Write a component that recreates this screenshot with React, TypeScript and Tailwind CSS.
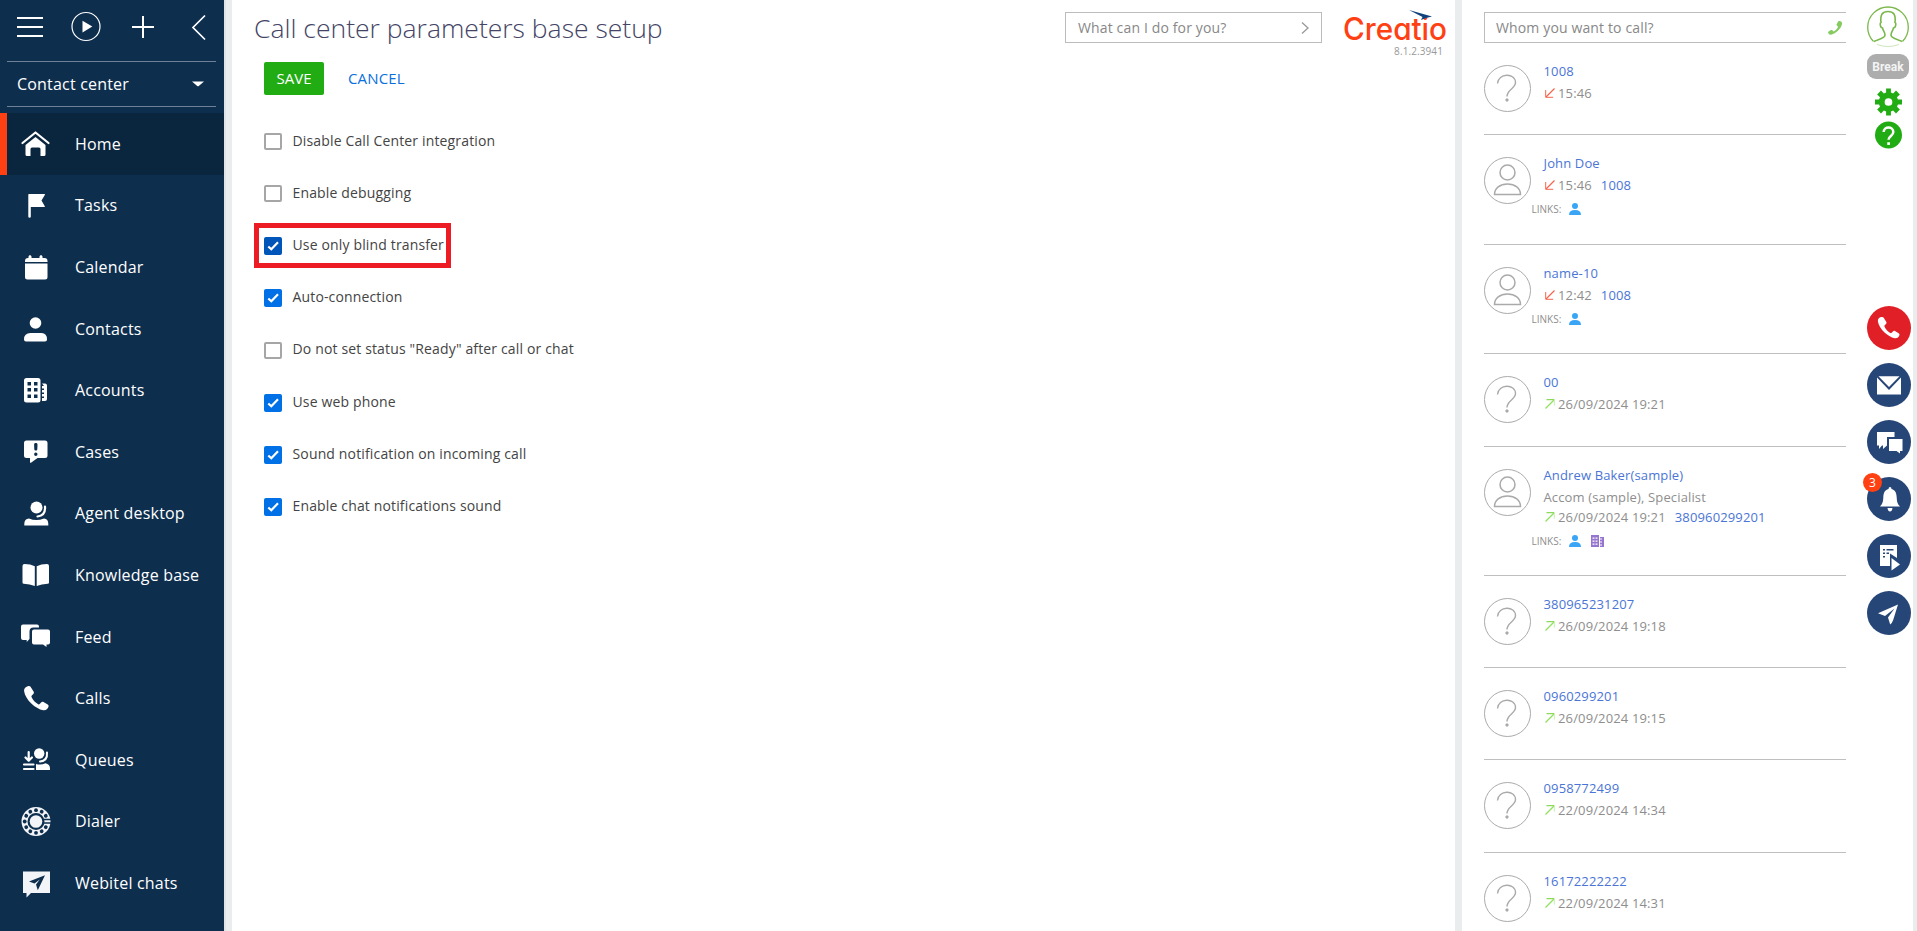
import { useState } from 'react';
import type { ReactNode } from 'react';

interface Setting { id: string; label: string; checked: boolean; highlighted?: boolean; }
interface Call { name: string; time: string; incoming?: boolean; contact?: boolean; account?: boolean; job?: string; phone?: string; height: string; }

const PHONE = 'M5.2 1.2C3 1.8 1.2 3.6 1.6 6.2c.7 4.3 3.4 8.600 7.200 12.200 3.600 3.400 7.800 6 12 6.800 2.600.4 4.500-1.300 5.200-3.400.3-.9 0-1.700-.8-2.200l-4.200-2.500c-.8-.5-1.800-.3-2.400.4l-1.400 1.600c-.4.4-1 .5-1.500.2-3-1.800-5.200-4.200-6.700-7.300-.2-.5-.1-1 .3-1.400l1.500-1.500c.6-.6.8-1.500.4-2.300L8.200 1.900c-.4-.8-1.600-1-3-.7z';

const MENU: { label: string; icon: ReactNode }[] = [
  { label: 'Home', icon: <><path d="M2 13 15 2.500 28 13" fill="none" stroke="currentColor" strokeWidth="2.200" strokeLinecap="round" strokeLinejoin="round" /><path d="M15 7 25 15v9.500a1.500 1.500 0 0 1-1.500 1.500H20v-7a1.500 1.500 0 0 0-1.500-1.500h-7A1.500 1.500 0 0 0 10 19v7H6.500A1.500 1.500 0 0 1 5 24.500V15z" /></> },
  { label: 'Tasks', icon: <path d="M8.500 3H24q.8 0 .3.900L21 9.500l3.300 5.800q.4.800-.4.800H10.300V25.500a1.200 1.200 0 0 1-2.500 0V3.600Q7.800 3 8.500 3z" /> },
  { label: 'Calendar', icon: <path d="M9.500 2.200c.8 0 1.500.7 1.500 1.400V5h8V3.600c0-.7.700-1.400 1.500-1.400s1.500.7 1.500 1.400V5h2a3 3 0 0 1 3 3v1H4.500V8a3 3 0 0 1 3-3H8V3.600c0-.7.700-1.400 1.500-1.400zM4.500 10.600H27V24a2.500 2.500 0 0 1-2.500 2.500H7A2.500 2.500 0 0 1 4.500 24z" /> },
  { label: 'Contacts', icon: <><circle cx="15" cy="8" r="5.800" /><path d="M10 18h11q5.500 0 5.500 6.500 0 2-2 2h-19q-2 0-2-2Q3.500 18 10 18z" /></> },
  { label: 'Accounts', icon: <path fillRule="evenodd" d="M6 2h11.500A2.500 2.500 0 0 1 20 4.500V24a2.500 2.500 0 0 1-2.500 2.500H6A2.500 2.500 0 0 1 3.500 24V4.500A2.500 2.500 0 0 1 6 2zm1 4v3.500h3.500V6zm6.500 0v3.500H17V6zM7 12v3.500h3.500V12zm6.500 0v3.500H17V12zM7 18.500V22h3.500v-3.500zm6.500 0V22H17v-3.500zM21.500 7.500h3a2 2 0 0 1 2 2V23a2 2 0 0 1-2 2h-3v-3h2v-1.500h-2v-2.500h2v-1.500h-2V14h2v-1.500h-2V10h2z" /> },
  { label: 'Cases', icon: <path fillRule="evenodd" d="M6 2.500h18.500A2.500 2.500 0 0 1 27 5v12.500a2.500 2.500 0 0 1-2.500 2.500H17l-6.500 4.700q-1 .5-1-.5V20H6a2.500 2.500 0 0 1-2.500-2.500V5A2.500 2.500 0 0 1 6 2.500zM15.300 5c-1 0-1.800.5-1.700 1.500l.2 4.500c0 1 .6 1.500 1.500 1.500s1.500-.5 1.500-1.500L17 6.500C17 5.500 16.300 5 15.300 5zm0 9.500a1.700 1.700 0 1 0 0 3.400 1.700 1.700 0 0 0 0-3.400z" /> },
  { label: 'Agent desktop', icon: <><circle cx="16" cy="8.500" r="6" /><path d="M24.500 7.500c.5 6-2.500 9.500-7.500 10" fill="none" stroke="currentColor" strokeWidth="2.200" strokeLinecap="round" /><path d="M8.500 19.500q7 3 15 0 4.300.3 4.300 5.500v1.500h-24V25q0-5.200 4.700-5.500z" /></> },
  { label: 'Knowledge base', icon: <path d="M2 5q0-2 2-2 6 0 10.300 2.300V25q-4.800-2-11-2.200Q2 22.700 2 21.400zM28.500 5q0-2-2-2-6 0-10.300 2.300V25q4.800-2 11-2.200 1.300-.1 1.300-1.400z" /> },
  { label: 'Feed', icon: <path d="M3 1.500h13.500q2 0 2 2V4.500H13q-4 0-4 4V16l-2.800 3v-2H2.500q-2 0-2-2V3.500q0-2 2-2zM13.500 6.500h14q2 0 2 2v11q0 2-2 2H26v2.500l-3.500-2.500h-9q-2 0-2-2v-11q0-2 2-2z" /> },
  { label: 'Calls', icon: <path d={PHONE} transform="translate(2 1)" /> },
  { label: 'Queues', icon: <><path d="M8.200 6v8M5 11.500l3.200 3.200 3.200-3.200M3.500 18.500H13M3.500 23H13" fill="none" stroke="currentColor" strokeWidth="2.200" strokeLinecap="round" strokeLinejoin="round" /><circle cx="18.700" cy="7.500" r="5.200" /><path d="M26.500 6.500c.5 5.500-2 8.500-7 9" fill="none" stroke="currentColor" strokeWidth="2" strokeLinecap="round" /><path d="M15.500 24v-6q5 1.500 9.500-.8 4.500.8 4.500 5.300V24z" /></> },
  { label: 'Dialer', icon: <Dial /> },
  { label: 'Webitel chats', icon: <path fillRule="evenodd" fill="#f2f4f7" d="M2.500 2.500h27V24H10.500L6 28.500V24H2.500zM24.500 6.200 8.500 12.500l5.500 2 5.300-4-3.800 5 1.800 5.800z" /> },
];

const SETTINGS: Setting[] = [
  { id: 'disable', label: 'Disable Call Center integration', checked: false },
  { id: 'debug', label: 'Enable debugging', checked: false },
  { id: 'blind', label: 'Use only blind transfer', checked: true, highlighted: true },
  { id: 'auto', label: 'Auto-connection', checked: true },
  { id: 'ready', label: 'Do not set status "Ready" after call or chat', checked: false },
  { id: 'webphone', label: 'Use web phone', checked: true },
  { id: 'sound', label: 'Sound notification on incoming call', checked: true },
  { id: 'chatsound', label: 'Enable chat notifications sound', checked: true },
];

const CALLS: Call[] = [
  { name: '1008', time: '15:46', incoming: true, height: 'h-[92px]' },
  { name: 'John Doe', time: '15:46', incoming: true, contact: true, phone: '1008', height: 'h-[110px]' },
  { name: 'name-10', time: '12:42', incoming: true, contact: true, phone: '1008', height: 'h-[109px]' },
  { name: '00', time: '26/09/2024 19:21', height: 'h-[93px]' },
  { name: 'Andrew Baker(sample)', time: '26/09/2024 19:21', contact: true, account: true, job: 'Accom (sample), Specialist', phone: '380960299201', height: 'h-[129px]' },
  { name: '380965231207', time: '26/09/2024 19:18', height: 'h-[92px]' },
  { name: '0960299201', time: '26/09/2024 19:15', height: 'h-[92px]' },
  { name: '0958772499', time: '22/09/2024 14:34', height: 'h-[93px]' },
  { name: '16172222222', time: '22/09/2024 14:31', height: 'h-[92px]' },
];

const COMMUNICATION: { id: string; bg: string; icon: ReactNode; badge?: number }[] = [
  { id: 'phone', bg: 'bg-[#e01f26]', icon: <path d={PHONE} transform="translate(9.500 10) scale(.88)" /> },
  { id: 'mail', bg: 'bg-[#274678]', icon: <path d="M10 14.500v17h24v-17L22 27zM11.500 13.300h21L22 24z" /> },
  { id: 'chat', bg: 'bg-[#274678]', icon: <path d="M10 12h17.500v5H20v8.500L16 29v-3.500h-1L12 29v-3.500h-2zM22 19h13.500v12H33v2.500L29.500 31H22z" /> },
  { id: 'bell', bg: 'bg-[#274678]', badge: 3, icon: <path d="M23 10q1.500 0 1.500 2c4 1.200 5 4 5.200 8.500.2 4.500 1 6.500 3.300 9H13c2.300-2.500 3.100-4.500 3.300-9 .2-4.500 1.200-7.300 5.200-8.500q0-2 1.500-2zM20.500 31h5Q25 34.500 23 34.500T20.500 31z" /> },
  { id: 'process', bg: 'bg-[#274678]', icon: <><path fillRule="evenodd" d="M13 11h17v13l-7-4.500V32H13zM16 15v1.500h2V15zm3.500 0v1.500h7V15zM16 18.500V20h2v-1.500zm3.500 0V20h2.500v-1.500zM16 22v1.500h2V22z" /><path d="m24.500 24 8.500 6.500-8.500 6z" /></> },
  { id: 'send', bg: 'bg-[#274678]', icon: <path d="M31 13.500 11 22.300l7 2.600 9.500-7.300-6.500 8.800 2.200 7q1.800-1 3-4.400z" /> },
];

// Rotary dial face
function Dial() {
  return (
    <>
      <circle cx="15.500" cy="14.500" r="11.500" fill="none" stroke="#f2f4f7" strokeWidth="6" />
      <circle cx="15.500" cy="14.500" r="6.300" fill="#f2f4f7" />
      {[30, 60, 90, 120, 150, 180, 210, 240, 270, 300, 330].map((a) => (
        <circle key={a} cx="26.800" cy="14.500" r="1.900" fill="#0e2e4e" transform={`rotate(${a} 15.500 14.500)`} />
      ))}
      <path d="M23.500 12.500H31M23.500 16H31" stroke="#0e2e4e" strokeWidth="1.300" />
    </>
  );
}

function Sidebar() {
  const [active, setActive] = useState('Home');
  return (
    <nav className="w-[224px] shrink-0 bg-[#0e2e4e] text-[16px] tracking-[0.190px] text-white">
      <svg className="block h-[61px] w-[224px]" viewBox="0 0 224 61" fill="none" stroke="white">
        <path d="M17 18h26M17 27h26M17 36h26M132 27h22M143 16v22" strokeWidth="2" />
        <circle cx="86" cy="26.500" r="14" strokeWidth="1.200" />
        <path d="m82.500 20.800 9.800 5.700-9.800 6z" fill="white" stroke="none" />
        <path d="M205 15.500 193 27.500l12 12" strokeWidth="1.700" />
      </svg>
      <div className="mx-[7px] mr-2 mb-[6px] flex h-[46px] items-center justify-between border-y border-[#6f829a] pr-3 pl-[10px]">
        <span>Contact center</span>
        <svg className="h-[6px] w-3" viewBox="0 0 12 6" fill="white"><path d="M0 .5h12L6.800 5q-.8.600-1.600 0z" /></svg>
      </div>
      {MENU.map((m) => (
        <button key={m.label} onClick={() => setActive(m.label)}
          className={`flex h-[61.600px] w-full items-center border-l-[7px] pl-[13px] text-left ${active === m.label ? 'border-[#ff4013] bg-[#0a263f]' : 'border-transparent'}`}>
          <svg className="mr-[23px] h-8 w-8 shrink-0" viewBox="-.5 -2 32 32" fill="currentColor">{m.icon}</svg>
          <span>{m.label}</span>
        </button>
      ))}
    </nav>
  );
}

function Checkbox({ item, onToggle }: { item: Setting; onToggle: () => void }) {
  return (
    <button onClick={onToggle} className="relative flex h-[52.200px] items-center text-left">
      {item.checked ? (
        <svg className={`h-[18px] w-[18px] rounded-[2px] ${item.highlighted ? 'bg-[#0056b8]' : 'bg-[#0070e6]'}`} viewBox="0 0 18 18" fill="none" stroke="white" strokeWidth="2.200">
          <path d="m4.300 9.500 3 2.700 6.700-7" />
        </svg>
      ) : <span className="h-[17px] w-[18px] rounded-[2px] border-2 border-[#a6a6a6]" />}
      <span className="mb-[3px] ml-[10.500px] text-[14px] tracking-[0.150px] whitespace-nowrap text-[#444]">{item.label}</span>
      {item.highlighted && <span className="pointer-events-none absolute top-[3px] -left-[10px] h-[45px] w-[197px] border-[5px] border-[#ed1c24]" />}
    </button>
  );
}

function Creatio() {
  return (
    <svg className="-mt-2 -mb-3 h-[54px] w-[106px] overflow-visible" viewBox="0 -8 106 54">
      <text x="-1" y="32" fontFamily="Inter, sans-serif" fontSize="31" fontWeight="500" fill="#ff4013" textLength="104" lengthAdjust="spacingAndGlyphs" style={{ fontFeatureSettings: '"cv11"' }}>Creatio</text>
      <path d="m65 2 23 6.500-6 1.500-5 2 1.500-3z" fill="#12427c" />
    </svg>
  );
}

function Main() {
  const [settings, setSettings] = useState(SETTINGS);
  const toggle = (id: string) => setSettings(settings.map((s) => (s.id === id ? { ...s, checked: !s.checked } : s)));
  return (
    <main className="w-[1223px] shrink-0 bg-white">
      <header className="flex h-[62px] items-start pl-[22px]">
        <h1 className="w-[811px] pt-[9px] text-[26.500px] leading-[38px] font-light text-[#444466]">Call center parameters base setup</h1>
        <div className="mt-3 flex h-[31px] w-[257px] items-center justify-between border border-[#bcbcbc] pr-3 pl-3">
          <span className="text-[14px] tracking-[0.140px] text-[#888]">What can I do for you?</span>
          <svg className="h-3 w-2" viewBox="0 0 8 12" fill="none" stroke="#999" strokeWidth="1.300"><path d="m1 .5 6 5.500-6 5.500" /></svg>
        </div>
        <div className="ml-[22px] flex w-[106px] flex-col pt-[8px]">
          <Creatio />
          <span className="self-end pr-[7px] text-[10px] leading-[18px] tracking-[0.100px] text-[#999]">8.1.2.3941</span>
        </div>
      </header>
      <div className="flex items-center gap-6 pl-8">
        <button className="h-[33px] w-[60px] rounded-[2px] bg-[#22ac14] text-[15px] text-white">SAVE</button>
        <button className="text-[15px] tracking-[0.150px] text-[#0b6fde]">CANCEL</button>
      </div>
      <div className="flex flex-col items-start pt-[20.500px] pl-8">
        {settings.map((s) => <Checkbox key={s.id} item={s} onToggle={() => toggle(s.id)} />)}
      </div>
    </main>
  );
}

function Avatar({ known }: { known?: boolean }) {
  return (
    <svg className="h-12 w-[47px] shrink-0" viewBox="0 0 47 48" fill="none" stroke="#aaa">
      <circle cx="23.500" cy="23.500" r="23" />
      {known ? (
        <g strokeWidth="1.500"><circle cx="23.500" cy="15.500" r="7.500" /><path d="M10.500 37.500h26c0-6.500-5.500-10.500-13-10.500s-13 4-13 10.500z" /></g>
      ) : (
        <g><path d="M13.500 18.500c.5-10.500 18-11 18-1 0 6-8.500 7-8.500 14" strokeWidth="1.400" /><circle cx="23" cy="35" r="1.200" fill="#aaa" /></g>
      )}
    </svg>
  );
}

function CallRow({ call }: { call: Call }) {
  return (
    <div className={`flex shrink-0 border-b border-[#bfbfbf] pt-[22px] ${call.height}`}>
      <Avatar known={call.contact} />
      <div className="text-[13px] tracking-[0.140px] whitespace-nowrap text-[#8e8e8e]">
        <div className="-mt-[5px] pl-[12.500px] leading-[22px] text-[#4a75d6]">{call.name}</div>
        {call.job && <div className="-mb-[2px] pl-[12.500px] leading-[22px]">{call.job}</div>}
        <div className="flex items-center pl-[14px] leading-[22px]">
          <svg className="mr-[3px] h-[10px] w-[10px]" viewBox="0 0 10 10" fill="none">
            {call.incoming ? (
              <><path d="M9.500.5 1 9" stroke="#f4664f" strokeWidth="1.300" /><path d="M.7 2v7.300h7.500" stroke="#f4664f" /></>
            ) : (
              <><path d="M.5 9.500 9 1" stroke="#8fe05c" strokeWidth="1.300" /><path d="M1.500.7h7.800" stroke="#6fd032" /><path d="M9.300.7v6" stroke="#c9efb0" /></>
            )}
          </svg>
          {call.time}
          {call.phone && <span className="ml-[9px] text-[#4a75d6]">{call.phone}</span>}
        </div>
        {call.contact && (
          <div className="flex h-[26px] items-center text-[10px] tracking-normal">
            <span className="w-[38px] pl-[0.500px]">LINKS:</span>
            <svg className="h-3 w-3" viewBox="0 0 12 12" fill="#3aa5f5"><circle cx="6" cy="3" r="3" /><path d="M0 12q0-5 6-5t6 5z" /></svg>
            {call.account && (
              <svg className="ml-[10px] h-3 w-[13px]" viewBox="0 0 13 12" fill="#9575cd">
                <path fillRule="evenodd" d="M0 0h8v12H0zM1.500 2.500v1.200h2V2.500zm3 0v1.200h2V2.500zm-3 3v1.200h2V5.500zm3 0v1.200h2V5.500zm-3 3v1.200h2V8.500zm3 0v1.200h2V8.500zM9 2h4v10H9v-1.500h2V9.500H9V7.500h2v-1H9v-2h2v-1H9z" />
              </svg>
            )}
          </div>
        )}
      </div>
    </div>
  );
}

function Rail() {
  return (
    <aside className="ml-[21px] flex w-[46px] shrink-0 flex-col pt-[5px]">
      <svg className="h-[43px] w-[42px]" viewBox="0 0 42 43" fill="none" stroke="#7ab84b" strokeWidth="1.300">
        <path d="M6.500 36.500a20.300 20.300 0 1 1 29 0" />
        <path d="M10 39.500q11 4 22 0" stroke="#cfe6be" strokeWidth="1" />
        <path d="M7 36.500c4.500-2.500 11-3 11-6.500 0-3-1.500-3.500-2.500-7-2.500-.5-3-5-1.500-5.500-1-8 1.500-11 7-11s8 3 7 11c1.500.5 1 5-1.500 5.500-1 3.500-2.500 4-2.500 7 0 3.500 6.500 4 11 6.500" strokeWidth="1.600" />
      </svg>
      <div className="mt-[6px] flex h-[25px] w-[42px] items-center justify-center rounded-[9px] bg-[#adadad] font-[Roboto,sans-serif] text-[12px] font-bold text-[#f4f4f4]">Break</div>
      <svg className="mt-[9px] ml-[8px] h-7 w-[27px]" viewBox="0 0 28 28" fill="#22ac14">
        <path fillRule="evenodd" d="M11.500 0h5v4.200l2.300 1 3-3 4 4-3 3 1 2.300H28v5h-4.200l-1 2.300 3 3-4 4-3-3-2.300 1V28h-5v-4.200l-2.300-1-3 3-4-4 3-3-1-2.300H0v-5h4.200l1-2.300-3-3 4-4 3 3 2.300-1zM14 10a4 4 0 1 0 0 8 4 4 0 0 0 0-8z" />
      </svg>
      <svg className="mt-[5px] ml-[8px] h-7 w-[27px]" viewBox="0 0 28 28" fill="none">
        <circle cx="14" cy="14" r="14" fill="#22ac14" />
        <path d="M9 11c0-6.500 10-6.500 10 0 0 4-5 4-5 8" stroke="white" strokeWidth="2.600" />
        <path d="M12.700 21.500h2.800v2.800h-2.800z" fill="white" />
      </svg>
      <div className="mt-[156.500px] flex flex-col gap-[13.200px]">
        {COMMUNICATION.map((c) => (
          <button key={c.id} className={`relative h-11 w-11 rounded-full ${c.bg}`}>
            <svg className="h-11 w-11" viewBox="0 0 44 44" fill="white">{c.icon}</svg>
            {c.badge && <span className="absolute -top-[4px] -left-1 h-[19px] w-[19px] rounded-full bg-[#ff4013] text-center text-[12px] leading-[19px] text-white">{c.badge}</span>}
          </button>
        ))}
      </div>
    </aside>
  );
}

export default function App() {
  return (
    <div className="flex h-[931px] w-[1917px] overflow-hidden bg-[#e9eded] font-['Open_Sans','Noto_Sans',sans-serif]">
      <Sidebar />
      <div className="w-2 shrink-0 border-l-2 border-[#dfe3e5]" />
      <Main />
      <section className="ml-[7px] flex w-[451px] shrink-0 bg-white pl-[22px]">
        <div className="flex w-[362px] shrink-0 flex-col">
          <div className="mt-3 flex h-[31px] shrink-0 items-center justify-between border border-r-0 border-[#bcbcbc] pr-[3px] pl-[11px]">
            <span className="text-[14px] tracking-[0.140px] text-[#888]">Whom you want to call?</span>
            <svg className="h-4 w-4" viewBox="0 0 28 27" fill="#86cb62"><path d={PHONE} transform="matrix(-1 0 0 1 28 0)" /></svg>
          </div>
          {CALLS.map((c) => <CallRow key={c.name} call={c} />)}
        </div>
        <Rail />
      </section>
    </div>
  );
}
